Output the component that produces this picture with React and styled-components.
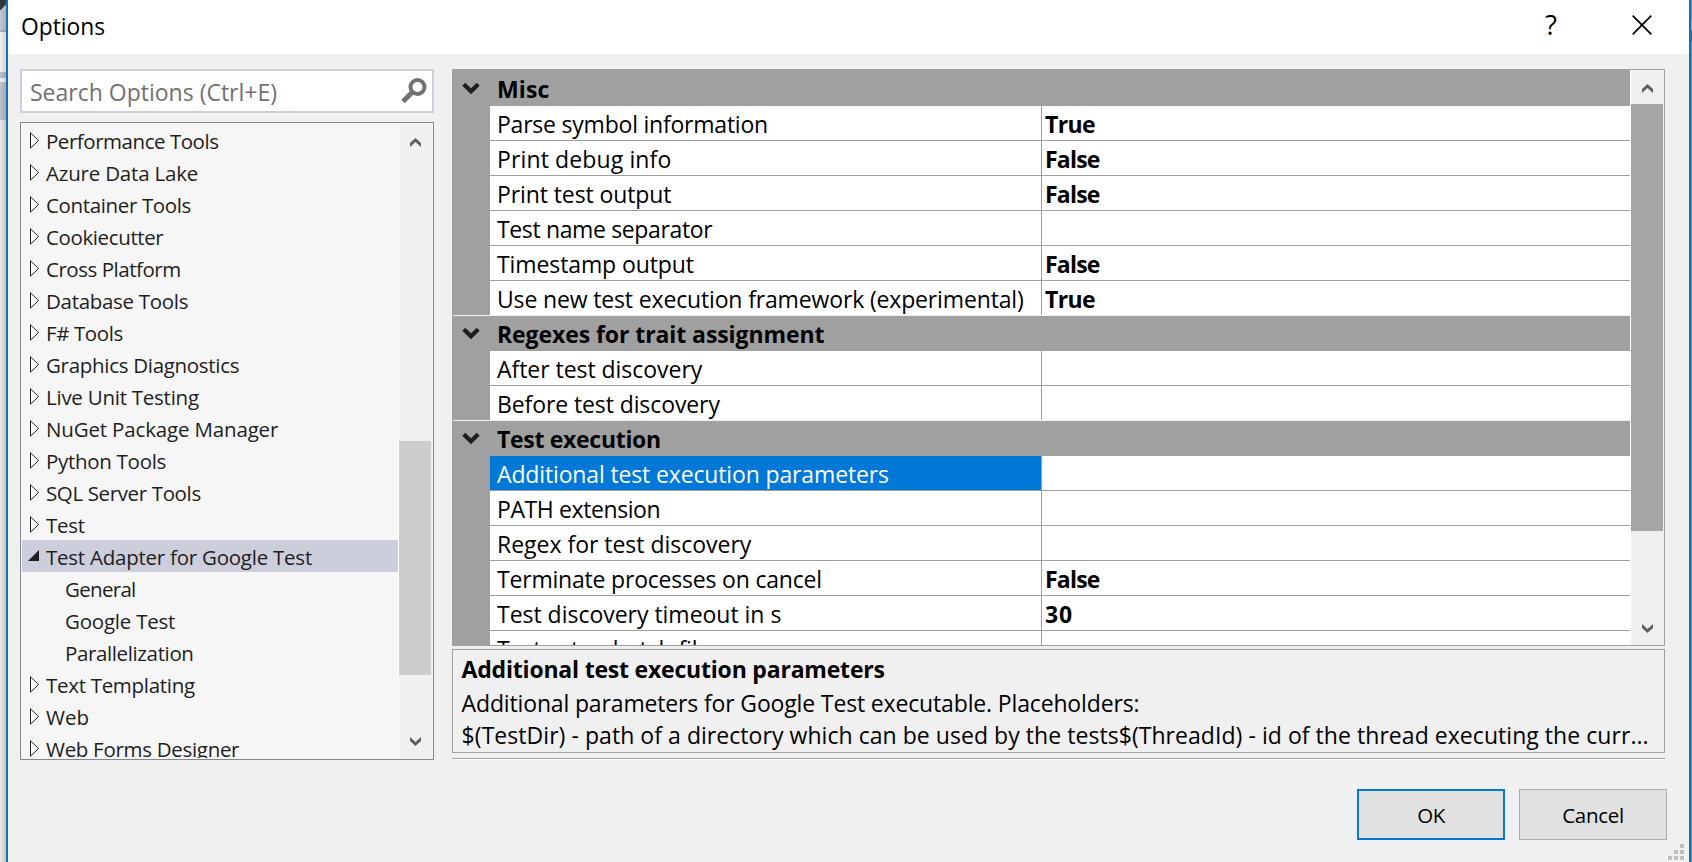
import React from 'react';
import styled, { createGlobalStyle } from 'styled-components';

const GlobalStyle = createGlobalStyle`
  *, *::before, *::after { box-sizing: border-box; }
  body {
    margin: 0;
    overflow: hidden;
    background: #f0f0f0;
    font-family: 'Open Sans', 'Noto Sans', sans-serif;
    color: #000;
  }
`;

const Desktop = styled.div`
  display: flex;
  width: 1692px;
  height: 862px;
  overflow: hidden;
`;

const LeftEdge = styled.div`
  width: 6px;
  display: flex;
  flex-direction: column;
  flex: none;
`;

const EdgeBand = styled.div`
  height: ${(p) => p.$h}px;
  flex: ${(p) => (p.$h ? 'none' : 1)};
  background: linear-gradient(${(p) => p.$dir || 'to right'}, ${(p) => p.$from}, ${(p) => p.$to});
`;

const RightEdge = styled.div`
  width: 1px;
  flex: none;
  background: linear-gradient(#3f97d0 0 20px, #6cb0dc 20px 30px, #2a6c9b 30px 42px, #3f97d0 42px);
`;

const Dialog = styled.div`
  flex: 1;
  display: flex;
  flex-direction: column;
  background: #f0f0f0;
  border: solid #1a6fa8;
  border-width: 0 2px;
`;

const TitleBar = styled.header`
  height: 54px;
  flex: none;
  display: flex;
  align-items: center;
  background: #fff;
  padding: 0 36px 4px 13px;
`;

const Title = styled.h1`
  flex: 1;
  margin: 0;
  font-size: 22.8px;
  font-weight: 400;
  line-height: 50px;
  padding-top: 4px;
`;

const TitleButton = styled.button`
  border: 0;
  padding: 0;
  background: none;
  display: flex;
  justify-content: center;
  align-items: center;
  width: 22px;
  height: 50px;
  margin-left: ${(p) => p.$gap || 0}px;
  font: 27px/50px 'Open Sans', sans-serif;
`;

const Body = styled.main`
  display: flex;
  gap: 18px;
  padding: 15px 0 0 12px;
`;

const Sidebar = styled.aside`
  width: 414px;
  display: flex;
  flex-direction: column;
  gap: 9px;
`;

const SearchBox = styled.div`
  height: 44px;
  display: flex;
  justify-content: space-between;
  border: 2px solid #cccedb;
  background: #fff;
  padding: 0 5px 0 8px;
  font-size: 23px;
  line-height: 43px;
  color: #717171;

  svg { margin-top: 6px; }
`;

const TreePanel = styled.div`
  height: 638px;
  display: flex;
  border: 1px solid #828790;
  background: #f6f6f6;
  padding: 1px;
`;

const Tree = styled.ul`
  flex: 1;
  height: 634px;
  overflow: hidden;
  list-style: none;
  margin: 0;
  padding: 0;
`;

const TreeItem = styled.li`
  display: flex;
  height: 32px;
  padding-left: ${(p) => (p.$child ? 43 : 6)}px;
  background: ${(p) => (p.$selected ? '#cccedb' : 'transparent')};
  font-size: 20.5px;
  line-height: 34px;
  white-space: nowrap;
  color: #1e1e1e;
  letter-spacing: ${(p) => p.$track}px;

  svg { flex: none; width: 18px; height: 32px; }
`;

const ScrollTrack = styled.div`
  width: 34px;
  flex: none;
  display: flex;
  flex-direction: column;
  align-items: center;
  background: #f0f0f0;
  border-left: 1px solid #fff;
  padding-right: 1px;
`;

const ScrollSpace = styled.div`
  height: ${(p) => p.$h}px;
  flex: none;
  display: flex;
  padding: ${(p) => p.$pad || 0}px 0 0;
`;

const ScrollThumb = styled.div`
  height: ${(p) => p.$h}px;
  flex: none;
  width: 32px;
  align-self: flex-start;
  background: ${(p) => p.$color};
`;

const Content = styled.section`
  width: 1213px;
  display: flex;
  flex-direction: column;
`;

const GridPanel = styled.div`
  height: 577px;
  display: flex;
  border: 1px solid #a0a0a0;
`;

const Grid = styled.div`
  flex: 1;
  height: 575px;
  overflow: hidden;
  background: #a0a0a0;
  font-size: 23px;
  white-space: nowrap;
`;

const Category = styled.div`
  display: flex;
  height: ${(p) => (p.$first ? 36 : 35)}px;
  padding-top: ${(p) => (p.$first ? 1 : 0)}px;
  font-weight: 700;
  line-height: 36px;
  letter-spacing: ${(p) => p.$track}px;
`;

const Expander = styled.div`
  width: 44px;
  flex: none;
  display: flex;
  padding: 11px 0 0 9px;
`;

const Rows = styled.div`
  margin-left: 37px;
  background: #fff;
`;

const SectionRule = styled.div`
  height: 1px;
  background: #f0f0f0;
`;

const PropertyRow = styled.div`
  display: flex;
  height: ${(p) => (p.$last ? 34 : 35)}px;
  border-bottom: ${(p) => (p.$last ? 0 : 1)}px solid #a0a0a0;
  line-height: 36px;
`;

const Name = styled.div`
  width: 551px;
  flex: none;
  padding-left: 7px;
  background: ${(p) => (p.$selected ? '#0078d7' : '#fff')};
  color: ${(p) => (p.$selected ? '#fff' : '#000')};
  letter-spacing: ${(p) => p.$track}px;
`;

const Value = styled.div`
  flex: 1;
  border-left: 1px solid #a0a0a0;
  padding-left: 3px;
  font-weight: 700;
  letter-spacing: ${(p) => p.$track}px;
`;

const Description = styled.div`
  height: 104px;
  margin-top: 3px;
  border: 1px solid #a0a0a0;
  padding: 0 8px 0 8.6px;
  overflow: hidden;
  white-space: nowrap;
  font-size: 23px;
`;

const DescTitle = styled.div`
  font-weight: 700;
  line-height: 34px;
  height: 34px;
  padding-top: 2px;
  letter-spacing: -0.2px;
`;

const DescLine = styled.div`
  line-height: 32px;
  padding-top: ${(p) => p.$top || 0}px;
  letter-spacing: ${(p) => p.$track}px;
`;

const Etched = styled.div`
  height: 2px;
  margin-top: 5px;
  border-top: 1px solid #a0a0a0;
  border-bottom: 1px solid #fff;
`;

const Footer = styled.footer`
  display: flex;
  justify-content: flex-end;
  gap: 14px;
  padding: 29px 22px 0 0;
`;

const PushButton = styled.button`
  width: 148px;
  height: 51px;
  padding: 0;
  border: ${(p) => (p.$primary ? '2px solid #0078d7' : '1px solid #adadad')};
  background: #e1e1e1;
  color: #000;
  font: 20.5px 'Open Sans', sans-serif;
  letter-spacing: ${(p) => (p.$primary ? -0.6 : -0.3)}px;
`;

const Grip = styled.svg`
  position: absolute;
  left: 1668px;
  top: 844px;
`;

const TREE = [
  { label: 'Performance Tools', track: -0.46 },
  { label: 'Azure Data Lake', track: -0.2 },
  { label: 'Container Tools', track: -0.36 },
  { label: 'Cookiecutter', track: -0.38 },
  { label: 'Cross Platform', track: -0.47 },
  { label: 'Database Tools' },
  { label: 'F# Tools', track: -0.4 },
  { label: 'Graphics Diagnostics' },
  { label: 'Live Unit Testing', track: -0.25 },
  { label: 'NuGet Package Manager', track: -0.16 },
  { label: 'Python Tools' },
  { label: 'SQL Server Tools', track: -0.37 },
  { label: 'Test' },
  { label: 'Test Adapter for Google Test', open: true, track: -0.24 },
  { label: 'General', child: true, track: -0.7 },
  { label: 'Google Test', child: true, track: -0.22 },
  { label: 'Parallelization', child: true, track: -0.37 },
  { label: 'Text Templating' },
  { label: 'Web', track: 0 },
  { label: 'Web Forms Designer' },
];

const SECTIONS = [
  {
    title: 'Misc',
    track: 0.1,
    rows: [
      { name: 'Parse symbol information', value: 'True', track: -0.22 },
      { name: 'Print debug info', value: 'False', track: 0.12 },
      { name: 'Print test output', value: 'False', track: -0.1 },
      { name: 'Test name separator', track: -0.36 },
      { name: 'Timestamp output', value: 'False', track: -0.1 },
      { name: 'Use new test execution framework (experimental)', value: 'True' },
    ],
  },
  {
    title: 'Regexes for trait assignment',
    track: -0.08,
    rows: [
      { name: 'After test discovery', track: -0.04 },
      { name: 'Before test discovery', track: -0.1 },
    ],
  },
  {
    title: 'Test execution',
    track: -0.3,
    rows: [
      { name: 'Additional test execution parameters', selected: true, track: -0.14 },
      { name: 'PATH extension', track: -0.4 },
      { name: 'Regex for test discovery', track: -0.02 },
      { name: 'Terminate processes on cancel', value: 'False', track: -0.2 },
      { name: 'Test discovery timeout in s', value: '30', track: -0.02 },
      { name: 'Test setup batch file', track: -0.1 },
    ],
  },
];

const VALUE_TRACK = { True: -0.6, False: -0.8, 30: 0.9 };

const Twisty = ({ open }) => (
  <svg viewBox="0 0 18 32">
    {open ? (
      <path d="M11 10v11H0z" fill="#1e1e1e" />
    ) : (
      <path d="M2.5 8.8v15.4L10.5 16.5z" fill="#fff" stroke="#1e1e1e" strokeWidth="1" />
    )}
  </svg>
);

const ScrollArrow = ({ down }) => (
  <svg width="11" height="9" viewBox="0 0 11 9">
    <path
      d={down ? 'M0 0L5.5 5L11 0V4L5.5 9L0 4z' : 'M0 9L5.5 4L11 9V5L5.5 0L0 5z'}
      fill="#606060"
    />
  </svg>
);

export default function App() {
  return (
    <>
      <GlobalStyle />
      <Desktop>
        <LeftEdge>
          <EdgeBand $h={10} $dir="135deg" $from="#36373c 62%" $to="#b9bfd1 70%" />
          <EdgeBand $h={20} $from="#c3c8d8" $to="#a9aec0" />
          <EdgeBand $h={2} $from="#a9b3c8" $to="#8f99ae" />
          <EdgeBand $h={40} $from="#efeff0" $to="#d4d4d6" />
          <EdgeBand $h={6} $from="#b9c0d0" $to="#9da5b7" />
          <EdgeBand $h={4} $from="#efeff0" $to="#d4d4d6" />
          <EdgeBand $h={38} $from="#bfc2cf" $to="#a6a9b6" />
          <EdgeBand $from="#eaeaea" $to="#c6c6c6" />
        </LeftEdge>
        <Dialog>
          <TitleBar>
            <Title>Options</Title>
            <TitleButton>?</TitleButton>
            <TitleButton $gap={69}>
              <svg width="20" height="20" viewBox="0 0 20 20">
                <path d="M.7.7l18.6 18.6M19.3.7L.7 19.3" stroke="#000" strokeWidth="1.7" />
              </svg>
            </TitleButton>
          </TitleBar>
          <Body>
            <Sidebar>
              <SearchBox>
                <span>Search Options (Ctrl+E)</span>
                <svg width="26" height="27" viewBox="0 0 26 27">
                  <circle cx="16.5" cy="10" r="7" fill="none" stroke="#717171" strokeWidth="4" />
                  <path d="M11.5 15L2 24.5" stroke="#717171" strokeWidth="5" />
                </svg>
              </SearchBox>
              <TreePanel>
                <Tree>
                  {TREE.map((n) => (
                    <TreeItem key={n.label} $child={n.child} $selected={n.open} $track={n.track ?? -0.3}>
                      {!n.child && <Twisty open={n.open} />}
                      {n.label}
                    </TreeItem>
                  ))}
                </Tree>
                <ScrollTrack>
                  <ScrollSpace $h={317} $pad={14}><ScrollArrow /></ScrollSpace>
                  <ScrollThumb $h={234} $color="#cdcdcd" />
                  <ScrollSpace $h={83} $pad={62}><ScrollArrow down /></ScrollSpace>
                </ScrollTrack>
              </TreePanel>
            </Sidebar>
            <Content>
              <GridPanel>
                <Grid>
                  {SECTIONS.map((s, i) => (
                    <React.Fragment key={s.title}>
                      {i > 0 && <SectionRule />}
                      <Category $first={i === 0} $track={s.track}>
                        <Expander>
                          <svg width="18" height="13" viewBox="0 0 18 13">
                            <path d="M1.8 2.2L9 9.3L16.2 2.2" fill="none" stroke="#1e1e1e" strokeWidth="4.2" />
                          </svg>
                        </Expander>
                        {s.title}
                      </Category>
                      <Rows>
                        {s.rows.map((r, j) => (
                          <PropertyRow key={r.name} $last={i < 2 && j === s.rows.length - 1}>
                            <Name $selected={r.selected} $track={r.track ?? -0.15}>{r.name}</Name>
                            <Value $track={VALUE_TRACK[r.value] ?? 0}>{r.value}</Value>
                          </PropertyRow>
                        ))}
                      </Rows>
                    </React.Fragment>
                  ))}
                </Grid>
                <ScrollTrack>
                  <ScrollSpace $h={34} $pad={14}><ScrollArrow /></ScrollSpace>
                  <ScrollThumb $h={427} $color="#a6a6a6" />
                  <ScrollSpace $h={114} $pad={93}><ScrollArrow down /></ScrollSpace>
                </ScrollTrack>
              </GridPanel>
              <Description>
                <DescTitle>Additional test execution parameters</DescTitle>
                <DescLine $top={3} $track={-0.15}>
                  Additional parameters for Google Test executable. Placeholders:
                </DescLine>
                <DescLine $track={0.05}>
                  $(TestDir) - path of a directory which can be used by the tests$(ThreadId) - id of the thread executing the curr...
                </DescLine>
              </Description>
              <Etched />
            </Content>
          </Body>
          <Footer>
            <PushButton $primary>OK</PushButton>
            <PushButton>Cancel</PushButton>
          </Footer>
        </Dialog>
        <RightEdge />
        <Grip width="16" height="16" viewBox="0 0 16 16" fill="#bfbfbf">
          <path d="M12 0h4v4h-4zM6 6h4v4H6zM12 6h4v4h-4zM0 12h4v4H0zM6 12h4v4H6zM12 12h4v4h-4z" />
        </Grip>
      </Desktop>
    </>
  );
}
